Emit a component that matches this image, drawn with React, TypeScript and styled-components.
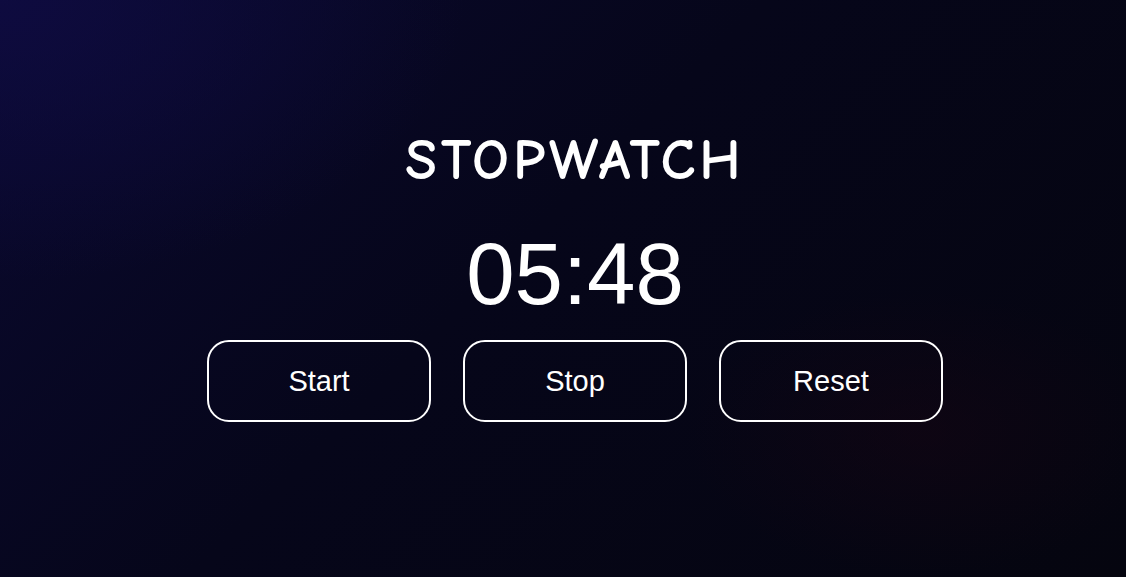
import React from "react";
import styled, { createGlobalStyle } from "styled-components";

const Global = createGlobalStyle`
  html, body { margin: 0; padding: 0; height: 100%; }
  body {
    background: #060617;
    font-family: "Liberation Sans", Arial, sans-serif;
  }
  #root { height: 100%; }
`;

const Page = styled.main`
  box-sizing: border-box;
  width: 100%;
  height: 577px;
  padding-left: 24px;
  display: flex;
  flex-direction: column;
  align-items: center;
  background:
    radial-gradient(ellipse 55% 65% at 0% 0%, rgba(16, 12, 70, 0.7), rgba(16, 12, 70, 0) 75%),
    radial-gradient(ellipse 30% 35% at 82% 75%, rgba(24, 6, 18, 0.45), rgba(24, 6, 18, 0) 70%),
    linear-gradient(135deg, #0a0930 0%, #06061a 45%, #05050f 100%);
  color: #ffffff;
`;

const Title = styled.h1`
  margin: 123px 0 0;
  font-family: "Comic Sans MS", "Comic Neue", "Chalkboard", cursive;
  font-weight: 700;
  font-size: 58px;
  letter-spacing: 4px;
  line-height: 76px;
`;

const Time = styled.div`
  margin-top: 25px;
  font-family: "Liberation Sans", Arial, sans-serif;
  font-size: 87px;
  line-height: 100px;
`;

const Controls = styled.div`
  display: flex;
  gap: 32px;
  margin-top: 16px;
`;

const Button = styled.button`
  width: 224px;
  height: 82px;
  box-sizing: border-box;
  border: 2px solid #ffffff;
  border-radius: 22px;
  background: transparent;
  color: #ffffff;
  font-family: "Liberation Sans", Arial, sans-serif;
  font-size: 29px;
  cursor: pointer;
`;

export default function App() {
  return (
    <>
      <Global />
      <Page>
        <Title>STOPWATCH</Title>
        <Time>05:48</Time>
        <Controls>
          <Button>Start</Button>
          <Button>Stop</Button>
          <Button>Reset</Button>
        </Controls>
      </Page>
    </>
  );
}
